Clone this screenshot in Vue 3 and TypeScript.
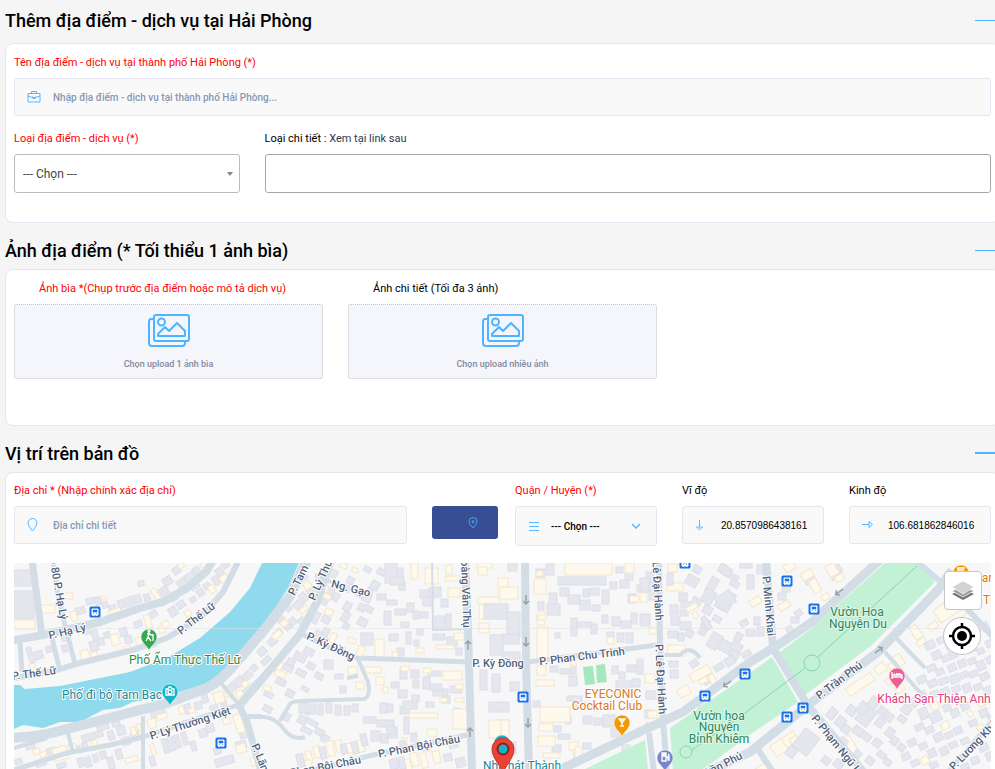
<script setup lang="ts">
import { ref } from 'vue'

interface Road { d: string; w: number }
interface Block { turn: number; cream: boolean; cells: string }
interface Label { text: string; x: number; y: number; turn?: number; kind?: string; start?: boolean }
interface Pin { x: number; y: number; fill: string; glyph: string; r: number }

const placeName = ref('')
const placeType = ref('')
const detailType = ref('')
const address = ref('')
const district = ref('')
const latitude = ref('20.8570986438161')
const longitude = ref('106.681862846016')

const roads: Road[] = [
  { d: 'M14 770L67 753L110 745L143 737L187 722L238 705', w: 5 },
  { d: 'M14 748L47 738M68 733L73 753M143 716V770M220 682L240 706M246 716H262', w: 4 },
  { d: 'M32 560L38 605L42 637', w: 7 },
  { d: 'M53 560L57 590L65 625L75 664M52 638L59 667M20 643L22 672', w: 5 },
  { d: 'M10 641L43 635L100 622L140 608L163 602L187 588L206 572L213 560', w: 8 },
  { d: 'M10 679L57 670L80 663L133 650L167 638L200 618L223 592L239 560', w: 6 },
  { d: 'M10 738Q40 737 67 729L117 716L167 703L207 688Q222 680 235 664L265 629L290 596L308 558', w: 10 },
  { d: 'M331 560L317 602L300 634L280 658L240 705', w: 8 },
  { d: 'M238 703L247 722L262 775', w: 7 },
  { d: 'M246 717H265Q275 718 283 728Q292 741 305 737M280 721L290 704Q293 701 300 701L364 699Q371 697 368 682L358 659M358 676L347 678', w: 4 },
  { d: 'M300 633L330 648L357 658L470 662', w: 5 },
  { d: 'M315 575L345 588', w: 4 },
  { d: 'M432 560L433 630L465 629', w: 2 },
  { d: 'M465 560L468 630L472 772', w: 8 },
  { d: 'M525 560L526 662L529 772', w: 8 },
  { d: 'M472 734L373 755L300 773', w: 5 },
  { d: 'M528 662L657 645', w: 5 },
  { d: 'M659 560L660 645L663 720L667 772', w: 6 },
  { d: 'M664 655H680Q690 644 700 658', w: 4 },
  { d: 'M553 773L633 735L683 712L750 662L778 645L812 622L882 558', w: 9 },
  { d: 'M708 772L750 752L812 702L878 652L938 590L952 570', w: 9 },
  { d: 'M766 560L773 648L808 706L866 775', w: 8 },
  { d: 'M912 558L946 586L995 639', w: 6 },
  { d: 'M885 652L922 695M896 638L925 668', w: 4 },
  { d: 'M755 745L773 772M649 733L654 772', w: 6 },
  { d: 'M948 772L995 718', w: 5 },
]

/* Each cell is "left top width height", turned about its own centre. */
const blocks: Block[] = [
  { turn: 0, cream: false, cells: '14 570 18 16|14 591 20 28' },
  { turn: 0, cream: true, cells: '14 620 21 9|40 605 15 8|62 593 11 6|102 596 4 4' },
  { turn: -17, cream: false, cells: '76 607 9 7|86 598 9 6|95 597 6 8|102 602 6 6|109 605 7 7|118 600 7 8|126 597 7 9|134 595 7 8|138 581 6 5|144 594 6 7|61 631 6 10|84 625 7 9|92 630 6 10|62 645 5 7|90 641 8 10|98 638 6 7|28 647 5 16|120 628 7 8|125 636 7 7|104 632 6 6|134 621 8 6|150 640 6 7|35 651 8 8|46 646 7 6' },
  { turn: -17, cream: true, cells: '109 609 12 4|71 611 6 10|111 634 8 11|81 650 8 10|123 646 8 5|136 637 7 8|145 615 6 13|159 626 6 7|91 652 6 5|29 664 6 4' },
  { turn: -34, cream: false, cells: '160 587 9 10|163 577 9 8|170 594 7 7|177 579 10 8|173 567 7 7|185 573 11 9|190 582 9 7|193 567 7 7|169 607 8 9|177 601 8 7|190 597 6 5|197 589 7 7|204 583 6 6|213 576 6 9|216 568 7 8|222 562 7 6|150 611 7 6' },
  { turn: -34, cream: true, cells: '153 588 5 12|178 563 6 5|209 585 6 8|220 575 8 7|162 621 7 7|185 610 6 6|200 562 9 4' },
  { turn: -16, cream: false, cells: '97 725 12 5|112 722 8 4|56 728 6 4|47 748 9 6|75 746 5 6|82 743 6 8|82 734 13 7|96 731 7 6|108 731 6 9|117 726 8 9|122 737 8 8|15 759 7 5|100 751 6 8|108 757 6 12|116 749 6 10|131 732 8 6|26 744 9 5|36 761 10 5|57 763 9 5|78 758 5 9|85 757 6 10|93 754 5 8|150 756 5 10|163 739 5 14|169 737 5 14|175 735 5 13|182 732 5 13|191 741 5 10|215 757 19 8|214 748 7 6|236 741 10 8|240 731 8 7|199 729 8 8|207 724 7 8|151 712 6 6|158 708 7 6|185 704 6 10|195 702 7 7|202 695 6 8|210 705 8 6|220 697 6 10' },
  { turn: -16, cream: true, cells: '53 747 14 13|33 749 7 5|40 752 7 5|68 744 8 7|92 740 6 10|100 717 10 4|133 706 7 4|148 719 8 9|157 714 10 5|131 727 5 8|137 724 4 6|151 744 4 11|179 706 5 8|189 708 6 5|235 714 8 19|236 744 10 9|214 692 10 11|125 757 13 5|223 718 7 6|251 757 6 9' },
  { turn: -42, cream: false, cells: '227 684 9 8|235 677 9 9|243 672 9 7|251 665 6 6|251 684 9 6|259 675 8 5|267 667 9 5|244 687 9 7|275 614 8 8|285 604 6 7|294 601 8 8|300 593 7 9|307 587 8 7|289 618 7 7|298 618 7 6|268 638 9 7|258 648 8 7|274 630 8 6|284 623 6 7|261 658 10 5|252 681 8 5|300 574 7 6' },
  { turn: -42, cream: true, cells: '272 632 10 6|281 620 7 6|299 607 9 5|304 582 7 7|236 691 7 6|274 664 10 6|225 690 7 6|242 681 7 6|298 564 9 5' },
  { turn: 28, cream: false, cells: '316 575 7 7|310 611 9 12|324 587 10 8|332 593 7 8|322 597 6 8|322 616 8 7|315 631 7 6|323 628 6 8|321 638 9 7|294 653 12 8|287 659 8 6|304 648 10 7|283 665 10 6|276 679 10 6|264 692 9 5|263 706 9 6|307 663 8 6|315 673 8 6|296 670 10 6|301 687 8 4|286 690 8 7|347 577 7 7|356 591 10 7|363 594 8 8|371 581 8 9|342 585 8 6|344 602 7 9|342 612 7 10|358 604 7 7|364 606 9 6|358 618 9 8|331 570 6 8|367 588 6 6|364 567 7 5|377 569 8 6|343 623 6 6|298 716 9 8|306 720 12 5|301 728 11 5|315 729 9 6|321 735 8 7|302 710 8 4|284 713 6 8' },
  { turn: 20, cream: true, cells: '325 570 7 5|320 585 8 7|325 609 8 6|323 594 8 5|330 633 6 10|348 638 8 5|340 647 5 8|275 671 11 6|263 686 8 5|357 646 7 12|352 568 6 4|340 563 7 5' },
  { turn: 0, cream: false, cells: '361 633 12 12|324 660 9 9|335 674 8 5|340 686 6 7|385 563 12 20|397 568 6 10|399 582 6 8|390 577 14 8|377 594 9 6|387 600 10 5|384 611 7 14|395 609 11 6|407 603 7 9|413 611 6 8|401 622 8 5|389 634 9 7|397 648 7 8|406 632 5 12|414 640 5 6|417 629 6 6|420 590 9 8|429 588 6 10|423 597 8 9|420 612 8 6|433 587 8 10|441 599 7 8|435 616 10 12|446 614 5 15|433 634 12 6|447 637 10 9|456 648 6 7|400 667 7 12|411 670 8 8|413 680 6 8|423 677 7 12|428 671 13 5|430 684 12 6|441 689 7 6|391 682 8 6|398 690 9 8|400 706 9 8|380 703 8 10|363 717 13 6|377 720 17 7|381 734 7 9|388 727 9 11|371 731 9 10|403 701 14 8|433 690 10 6|442 696 8 7|450 686 12 7|454 708 5 7|426 702 8 5|412 695 7 7|387 704 6 8|404 717 5 17|411 733 6 9|423 742 7 9|299 703 9 10|310 704 6 10|318 704 5 11|326 703 6 10|335 705 6 10|344 706 6 9|352 704 6 8' },
  { turn: 0, cream: true, cells: '411 563 7 16|425 568 13 16|446 576 17 5|448 588 12 9|454 633 10 7|436 645 18 4|375 639 9 19|392 652 6 8|416 648 8 5|365 667 16 6|348 667 9 7|376 677 8 8|383 687 5 6|401 666 8 5|423 668 8 5|443 671 19 9|455 684 8 5|440 698 7 4|453 709 17 20|409 713 29 5|427 729 10 7|402 738 5 8|455 698 9 4|434 738 8 5|356 682 8 7|477 563 15 5|478 597 22 7|498 578 10 20|503 587 6 10|479 623 10 10|479 604 6 15|489 720 20 18|500 587 18 12|478 567 9 8|446 565 6 9' },
  { turn: 0, cream: false, cells: '508 563 9 8|484 604 24 15|507 612 13 25|502 634 17 10|490 635 13 20|502 652 18 10|480 670 7 20|492 674 8 18|489 702 20 10|510 682 9 9|508 742 8 12|500 743 8 7' },
  { turn: -13, cream: true, cells: '306 751 6 13|314 746 6 12|327 741 7 15|336 740 6 12|347 743 6 10|358 740 6 12|405 759 6 12|411 753 7 13|421 753 6 15|433 751 7 12|305 760 6 10' },
  { turn: -13, cream: false, cells: '297 754 7 13|320 747 6 12|341 744 6 10|352 742 6 12|361 734 6 12|390 759 8 10|399 757 6 12|387 726 8 8|444 754 8 7|456 758 9 9|400 741 6 8|449 741 9 7' },
  { turn: 0, cream: false, cells: '536 569 9 8|546 564 8 11|558 577 48 8|549 593 8 20|560 588 9 8|568 595 12 9|583 589 6 8|590 588 9 7|580 600 10 10|592 605 8 6|602 590 7 14|610 582 7 7|620 580 9 8|628 594 8 9|637 585 12 7|646 572 7 9|538 602 6 8|547 604 13 11|571 618 6 18|577 622 15 5|591 624 6 10|555 633 5 5|602 615 6 8|612 617 8 9|621 621 10 7|631 613 6 11|640 614 10 12|607 632 7 6|617 633 7 9|626 633 7 10|640 578 10 14|649 582 6 18|616 567 7 6|625 571 8 9|550 666 8 6|560 669 14 5|571 665 5 9|569 676 8 10|612 666 6 8|619 672 6 7|627 665 9 7|637 659 6 15|616 681 15 8|632 679 8 8|646 691 10 8|645 710 9 8|533 701 7 6|567 696 15 5|576 702 10 5|583 716 9 8|603 715 12 12|594 718 9 7|611 729 13 8|554 726 7 6|558 734 12 5|583 743 8 6|566 715 5 9|668 631 10 7|678 633 6 8|669 661 9 6|670 670 8 8|646 723 6 6|552 745 9 7|574 752 8 6|622 745 8 6' },
  { turn: 0, cream: true, cells: '565 563 47 12|625 563 9 10|534 579 12 15|537 612 8 13|537 627 11 32|538 615 8 5|537 666 9 9|536 680 18 6|540 707 30 15|539 724 14 7|538 736 17 10|543 753 17 5|607 637 7 7|649 627 8 7|668 645 18 11|645 674 10 9|648 711 9 7|667 583 16 8|668 563 9 9|671 555 9 9|630 596 9 6|640 593 7 9|569 742 9 8|575 747 7 11|501 720 8 18|536 571 7 5|571 661 5 5' },
  { turn: 0, cream: false, cells: '670 605 8 10|679 593 8 8|667 573 6 12|681 602 9 6|680 610 8 6|671 617 9 8|680 622 11 8|740 563 12 5|747 575 7 14|757 565 6 9|782 583 8 9|778 593 8 7|791 617 8 6|754 617 6 8|746 630 9 6|757 627 7 9' },
  { turn: 30, cream: false, cells: '686 576 12 10|708 577 8 17|703 590 11 14|693 566 8 7|719 564 7 9|730 581 9 6|722 567 9 9|692 598 9 7|703 606 9 8|716 598 15 12|727 593 8 8|709 633 11 16|699 628 7 7|719 641 13 11|731 643 11 8|735 633 7 8|702 619 7 8|713 616 8 6|686 630 7 7|730 651 9 7|724 573 15 5' },
  { turn: -32, cream: false, cells: '717 593 17 14|725 657 10 8|714 664 10 6|704 616 5 14|740 620 8 6|703 677 8 7|787 626 6 8|795 610 7 6|804 575 11 8|831 573 9 6|835 565 6 8|698 703 8 7|690 660 8 7|742 651 9 6' },
  { turn: -30, cream: true, cells: '690 669 21 9|710 674 6 12|678 687 12 9|699 678 9 5|669 712 11 6|784 563 11 8|801 571 12 8|811 579 8 14|750 598 11 7|778 602 12 7|827 564 10 12|822 594 7 6|835 575 9 6|686 605 12 5|693 612 5 6' },
  { turn: -34, cream: true, cells: '845 680 30 9|875 664 11 9|893 655 10 12|889 662 9 8|895 684 9 8|886 678 8 6|772 741 15 13|783 734 14 11|790 737 8 6|756 764 17 11|846 735 9 22|912 625 8 14|928 623 10 6|917 639 9 6|935 602 26 15|961 614 12 8|931 702 8 8|968 711 5 6|977 725 7 6|921 757 8 7|941 722 8 7|978 700 8 6' },
  { turn: 38, cream: false, cells: '797 731 18 22|787 747 9 10|828 708 8 11|836 717 9 10|847 706 9 9|856 715 14 9|842 725 8 8|858 702 9 13|869 697 9 12|878 707 8 8|866 709 10 8|853 727 10 8|839 738 8 8|861 733 10 7|873 739 8 8|854 751 7 6|866 757 8 7|822 757 8 7|834 760 9 8|876 718 8 9|885 713 8 8|902 705 9 9|910 699 8 7|898 716 8 6|886 728 8 9|891 737 7 8|898 744 7 7|877 752 9 6|884 759 7 6' },
  { turn: -24, cream: false, cells: '925 641 10 8|937 637 9 6|946 643 8 6|932 651 9 8|942 655 9 6|950 650 7 8|959 647 8 6|967 644 9 8|977 648 7 6|986 640 7 7|927 665 9 6|936 669 8 6|948 664 8 7|958 660 8 7|968 658 8 6|977 661 8 9|986 656 8 7|917 676 9 7|928 680 9 7|939 678 9 6|950 675 9 8|960 672 8 6|969 671 9 6|980 673 9 7|919 691 7 6|930 691 9 6|941 688 8 7|952 686 8 6|963 684 8 8|974 684 8 6|984 687 8 7|919 708 9 11|930 712 11 10|943 704 8 7|951 709 8 8|961 703 8 7|969 720 8 6|980 709 8 8|988 715 7 6|915 724 9 6|925 727 9 6|934 733 9 8|945 732 8 6|954 727 8 7|908 739 8 7|919 743 8 6|928 749 8 8|940 747 8 8|949 742 8 6|961 738 8 6|902 753 8 7|911 760 8 6|930 762 8 6|979 744 9 7|986 752 8 8|971 757 8 7|961 764 8 6|960 630 8 8|971 626 9 7|981 622 7 8' },
]

const labels: Label[] = [
  { text: '- 80 P. Hạ Lý', x: 59, y: 590, turn: 80 },
  { text: 'P. Hạ Lý', x: 67, y: 631, turn: -13 },
  { text: 'P. Thế Lữ', x: 196, y: 618, turn: -38 },
  { text: 'P. Thế Lữ', x: 34, y: 673, turn: -8 },
  { text: 'P. Lý Thường Kiệt', x: 190, y: 723, turn: -18 },
  { text: 'P. Lãn Ông', x: 255, y: 744, turn: 68, start: true },
  { text: 'P. Tam', x: 298, y: 580, turn: -64 },
  { text: 'P. Lý Thu', x: 320, y: 580, turn: -66 },
  { text: 'Ng. Gạo', x: 351, y: 588, turn: 14 },
  { text: 'P. Kỳ Đồng', x: 331, y: 646, turn: 25 },
  { text: 'P. Kỳ Đồng', x: 498, y: 663 },
  { text: 'Hoàng Văn Thụ', x: 466, y: 590, turn: 88 },
  { text: 'P. Phan Bội Châu', x: 419, y: 746, turn: -11 },
  { text: 'P. Phan Bội Châu', x: 320, y: 767, turn: -11 },
  { text: 'P. Phan Chu Trinh', x: 582, y: 656, turn: -7 },
  { text: 'Lê Đại Hành', x: 658, y: 591, turn: 87 },
  { text: 'P. Lê Đại Hành', x: 661, y: 679, turn: 87 },
  { text: 'P. Minh Khai', x: 769, y: 606, turn: 85 },
  { text: 'P. Trần Phú', x: 839, y: 680, turn: -37 },
  { text: 'P. Trần Phú', x: 717, y: 767, turn: -27 },
  { text: 'P. Phạm Ngũ Lão', x: 814, y: 716, turn: 51, start: true },
  { text: 'P. Lương Khánh', x: 951, y: 768, turn: -46, start: true },
  { text: 'Phố Ẩm Thực Thế Lữ', x: 185, y: 660, kind: 'green' },
  { text: 'Phố đi bộ Tam Bạc', x: 112, y: 695, kind: 'teal' },
  { text: 'EYECONIC', x: 613, y: 694, kind: 'orange' },
  { text: 'Cocktail Club', x: 607, y: 706, kind: 'orange' },
  { text: 'Vườn Hoa', x: 857, y: 612, kind: 'park' },
  { text: 'Nguyễn Du', x: 858, y: 624, kind: 'park' },
  { text: 'Vườn hoa', x: 719, y: 716, kind: 'park' },
  { text: 'Nguyễn', x: 719, y: 727, kind: 'park' },
  { text: 'Bỉnh Khiêm', x: 719, y: 739, kind: 'park' },
  { text: 'Khách Sạn Thiện Anh', x: 934, y: 699, kind: 'pink' },
  { text: 'Nhà hát Thành', x: 522, y: 766, kind: 'teal' },
  { text: 'ar', x: 987, y: 578, kind: 'orange' },
  { text: 'Ti', x: 988, y: 600, kind: 'orange' },
]

const stops: number[][] = [
  [95, 612], [221, 743], [523, 697], [705, 696], [745, 674],
  [787, 717], [803, 708], [787, 581], [814, 609], [685, 563],
]

const pins: Pin[] = [
  { x: 149, y: 651, r: 8, fill: '#34a853', glyph: 'M1-5a1 1 0 1 0-2 0a1 1 0 1 0 2 0M-2-2L0-3L2-1L4-1M0-3L-1 1L2 5M-1 1L-3 5M4-2V5' },
  { x: 170, y: 706, r: 8, fill: '#12b5cb', glyph: 'M-4-2H-2L-1-4H1L2-2H4V4H-4ZM2 1a2 2 0 1 0-4 0a2 2 0 1 0 4 0' },
  { x: 622, y: 737, r: 8, fill: '#f29900', glyph: 'M-3-3H3L0 1ZM0 1V4M-2 4H2M-1-2H1' },
  { x: 897, y: 690, r: 8, fill: '#ec5f93', glyph: 'M-5-3V4M-5 2H5V0H-5M5 0V4M-1-1H4M-3-1H-2' },
  { x: 665, y: 772, r: 8, fill: '#7986cb', glyph: 'M-3 4V-4H1V4ZM-2-3H0V-1H-2ZM1 0H3V3H4V-2L3-3' },
  { x: 961, y: 587, r: 8, fill: '#f29900', glyph: 'M-4-4H4M-3-2H3M-3-4V0' },
  { x: 502, y: 757, r: 8, fill: '#12b5cb', glyph: 'M-2 0H2' },
]

const arrows: number[][] = [
  [468, 645, 0], [470, 732, 0], [526, 600, 180], [526, 642, 180], [528, 723, 180],
  [727, 684, 235], [839, 592, 235], [879, 650, 52],
]

const shapes = blocks.flatMap((block) =>
  block.cells.split('|').map((cell) => {
    const [x, y, w, h] = cell.split(' ').map(Number)
    return { x, y, w, h, cream: block.cream, turn: `rotate(${block.turn} ${x + w / 2} ${y + h / 2})` }
  }),
)

function pinPath(r: number): string {
  return `M0 0C-1-5-${r}-8-${r}-14A${r} ${r} 0 0 1 ${r}-14C${r}-8 1-5 0 0Z`
}
</script>

<template>
  <form class="page" @submit.prevent>
    <section class="section">
      <header class="head first">
        <h2>Thêm địa điểm - dịch vụ tại Hải Phòng</h2>
        <span class="rule"></span>
      </header>
      <div class="card basics">
        <div class="full">
          <label class="caption required" for="name">Tên địa điểm - dịch vụ tại thành phố Hải Phòng (*)</label>
          <div class="field">
            <svg class="icon" viewBox="0 0 14 14" width="14" height="14">
              <path d="M1 3.5h12v8.500H1zM4.500 3.500v-2h5v2M1 6l4.500 1.500h3L13 6M5.500 6.500v1.500q1.500 1.500 3 0v-1.500" />
            </svg>
            <input id="name" v-model="placeName" type="text" placeholder="Nhập địa điểm - dịch vụ tại thành phố Hải Phòng..." />
          </div>
        </div>
        <div class="quarter">
          <label class="caption required" for="type">Loại địa điểm - dịch vụ (*)</label>
          <div class="choice plain">
            <select id="type" v-model="placeType">
              <option value="">--- Chọn ---</option>
            </select>
            <svg class="caret" viewBox="0 0 6 4" width="6" height="4"><path d="M0 0H6L3 4Z" /></svg>
          </div>
        </div>
        <div class="rest">
          <label class="caption" for="detail">Loại chi tiết : <a href="#types">Xem tại link sau</a></label>
          <input id="detail" v-model="detailType" class="outlined" type="text" />
        </div>
      </div>
    </section>

    <section class="section">
      <header class="head">
        <h2>Ảnh địa điểm (* Tối thiểu 1 ảnh bìa)</h2>
        <span class="rule"></span>
      </header>
      <div class="card photos">
        <div class="third">
          <label class="caption inset required" for="cover">Ảnh bìa *(Chụp trước địa điểm hoặc mô tả dịch vụ)</label>
          <label class="drop">
            <svg viewBox="0 0 42 33" width="42" height="33">
              <rect x="6" y="1" width="35" height="26" rx="2" />
              <path d="M6 5H3Q1 5 1 8V29Q1 32 4 32H34Q37 32 37 29V27M10 22V20L17 13L21 17L29 9L37 17V22ZM17 8a3.500 3.500 0 1 0-7 0a3.500 3.500 0 1 0 7 0" />
            </svg>
            <span>Chọn upload 1 ảnh bìa</span>
            <input id="cover" type="file" accept="image/*" />
          </label>
        </div>
        <div class="third">
          <label class="caption inset" for="gallery">Ảnh chi tiết (Tối đa 3 ảnh)</label>
          <label class="drop">
            <svg viewBox="0 0 42 33" width="42" height="33">
              <rect x="6" y="1" width="35" height="26" rx="2" />
              <path d="M6 5H3Q1 5 1 8V29Q1 32 4 32H34Q37 32 37 29V27M10 22V20L17 13L21 17L29 9L37 17V22ZM17 8a3.500 3.500 0 1 0-7 0a3.500 3.500 0 1 0 7 0" />
            </svg>
            <span>Chọn upload nhiều ảnh</span>
            <input id="gallery" type="file" accept="image/*" multiple />
          </label>
        </div>
      </div>
    </section>

    <section class="section grow">
      <header class="head">
        <h2>Vị trí trên bản đồ</h2>
        <span class="rule thick"></span>
      </header>
      <div class="card location">
        <div class="row">
          <div class="five">
            <label class="caption required" for="address">Địa chỉ * (Nhập chính xác địa chỉ)</label>
            <div class="field">
              <svg class="icon" viewBox="0 0 14 14" width="14" height="14">
                <path d="M5.500 13Q1 8 1 5a4.500 4.500 0 0 1 9 0Q10 8 5.500 13Z" />
              </svg>
              <input id="address" v-model="address" type="text" placeholder="Địa chỉ chi tiết" />
            </div>
          </div>
          <button class="find" type="button" aria-label="Tìm trên bản đồ">
            <svg class="icon" viewBox="0 0 10 12" width="10" height="12">
              <path d="M5 11Q1 7 1 4.500a4 4 0 0 1 8 0Q9 7 5 11ZM5 3v3.500M3.500 4.800h3" />
            </svg>
          </button>
          <div class="two shifted">
            <label class="caption required" for="district">Quận / Huyện (*)</label>
            <div class="choice soft">
              <select id="district" v-model="district">
                <option value="">--- Chọn ---</option>
              </select>
              <svg class="icon lead" viewBox="0 0 10 9" width="10" height="9"><path d="M0 .5H10M0 4.500H10M0 8.500H10" /></svg>
              <svg class="icon chevron" viewBox="0 0 10 6" width="10" height="6"><path d="M1 1L5 5L9 1" /></svg>
            </div>
          </div>
          <div class="two">
            <label class="caption" for="lat">Vĩ độ</label>
            <div class="field">
              <svg class="icon" viewBox="0 0 14 14" width="14" height="14"><path d="M4.500 2V9M1.500 9H7.500L4.500 12Z" /></svg>
              <input id="lat" v-model="latitude" class="number" type="text" />
            </div>
          </div>
          <div class="two">
            <label class="caption" for="lng">Kinh độ</label>
            <div class="field">
              <svg class="icon" viewBox="0 0 14 14" width="14" height="14"><path d="M0 6.500H7M7 3.500V9.500L10.500 6.500Z" /></svg>
              <input id="lng" v-model="longitude" class="number" type="text" />
            </div>
          </div>
        </div>

        <div class="map">
          <svg class="canvas" viewBox="14 563 977 206" preserveAspectRatio="xMinYMin slice">
            <rect class="land" x="14" y="563" width="977" height="206" />
            <path class="water" d="M14 685L20 685L25 689L60 686L130 672L167 658L200 638L230 612L250 588L262 563H299L288 588L270 616L255 640L240 660L225 674L205 684L180 692L160 697L133 702L120 708L103 710L80 722L60 722L43 728L23 725L14 729Z" />
            <rect v-for="(s, i) in shapes" :key="i" :class="s.cream ? 'cream' : 'grey'" :x="s.x" :y="s.y" :width="s.w" :height="s.h" :transform="s.turn" />
            <path class="park" d="M780 652L812 628L885 563H918L935 582L872 645L805 695ZM670 728L740 680L772 657L798 702L745 738L700 772H673ZM583 770L645 740L648 770Z" />
            <path class="court" d="M583 667L593 666L595 684L585 685ZM596 665L605 664L607 682L597 683Z" />
            <path v-for="(r, i) in roads" :key="i" class="road" :d="r.d" :stroke-width="r.w" />
            <path class="trail" d="M692 750L745 713L805 668M818 657L917 566M820 663a8 8 0 1 0-16 0a8 8 0 1 0 16 0M692 752a6 6 0 1 0-12 0a6 6 0 1 0 12 0" />
            <path class="seam" d="M14 628.500H991" />
            <g v-for="(a, i) in arrows" :key="i" :transform="`translate(${a[0]} ${a[1]}) rotate(${a[2]})`">
              <path class="arrow" d="M0 5V-3M-3-1L0-4L3-1" />
            </g>
            <text
              v-for="(l, i) in labels" :key="i" :class="['street', l.kind, { start: l.start }]" dy="4"
              :transform="`translate(${l.x} ${l.y}) rotate(${l.turn ?? 0})`"
            >{{ l.text }}</text>
            <g v-for="(s, i) in stops" :key="i" :transform="`translate(${s[0]} ${s[1]})`">
              <rect class="stop" x="-5.500" y="-5.500" width="11" height="11" rx="1.500" />
              <path class="bus" d="M-3-3H3V3H-3ZM-2 3V4M2 3V4" />
              <path class="glass" d="M-2-2H2V0H-2ZM-2 1.500H-1M1 1.500H2" />
            </g>
            <g v-for="(p, i) in pins" :key="i" :transform="`translate(${p.x} ${p.y})`">
              <path :d="pinPath(p.r)" :fill="p.fill" stroke="#fff" stroke-width=".5" />
              <path class="glyph" transform="translate(0 -15)" :d="p.glyph" />
            </g>
            <g transform="translate(503 775)">
              <path d="M0 0C-1-9-11-16-11-26A11 11 0 0 1 11-26C11-16 1-9 0 0Z" fill="#ea4335" stroke="#c5362b" />
              <circle cy="-26" r="5.500" fill="#12b5cb" stroke="#8f201d" stroke-width="2" />
            </g>
          </svg>
          <button class="layers" type="button" aria-label="Lớp bản đồ">
            <svg viewBox="0 0 24 24" width="24" height="24">
              <path d="M1 15L12 21L23 15L12 10Z" fill="#747474" />
              <path d="M1 12L12 18L23 12L12 7Z" fill="#9d9d9d" stroke="#fff" stroke-width=".7" />
              <path d="M1 8L12 15L23 8L12 2Z" fill="#d2d2d2" stroke="#fff" stroke-width=".7" />
            </svg>
          </button>
          <button class="locate" type="button" aria-label="Vị trí của tôi">
            <svg viewBox="0 0 26 26" width="26" height="26">
              <circle cx="13" cy="13" r="9" fill="none" stroke="#000" stroke-width="2.500" />
              <circle cx="13" cy="13" r="5" />
              <path d="M13 0V5M13 21V26M0 13H5M21 13H26" stroke="#000" stroke-width="2.500" />
            </svg>
          </button>
        </div>
      </div>
    </section>
  </form>
</template>

<style>
body {
  background: #f5f5f5;
}
</style>

<style scoped>
* {
  box-sizing: border-box;
}
.page {
  display: flex;
  flex-direction: column;
  min-height: 100vh;
  padding-left: 5px;
  overflow: hidden;
  font-family: Roboto, 'Liberation Sans', sans-serif;
  font-size: 11px;
  color: #000;
}
.section {
  margin-right: -5px;
}
.grow {
  display: flex;
  flex: 1;
  flex-direction: column;
}
.head {
  display: flex;
  align-items: center;
  justify-content: space-between;
  height: 38px;
  margin-top: 8px;
}
.first {
  margin: 1px 0 4px;
}
h2 {
  margin: 0;
  font-size: 18px;
  font-weight: 500;
}
.rule {
  width: 25px;
  height: 1px;
  background: #4db5ff;
}
.thick {
  height: 2px;
}
.card {
  padding: 11px 8px 0;
  background: #fff;
  border: 1px solid #e6e6f2;
  border-radius: 8px;
}
.basics,
.photos,
.row {
  display: grid;
  grid-template-columns: repeat(12, minmax(0, 1fr));
  column-gap: 25px;
}
.basics {
  row-gap: 15px;
  padding-bottom: 29px;
}
.photos {
  padding-bottom: 46px;
}
.location {
  display: flex;
  flex: 1;
  flex-direction: column;
  gap: 17px;
  padding-top: 10px;
  border-bottom: 0;
  border-radius: 8px 8px 0 0;
}
.full { grid-column: span 12; }
.quarter { grid-column: span 3; }
.rest { grid-column: span 9; }
.third { grid-column: span 4; }
.five { grid-column: span 5; }
.two { grid-column: span 2; }
.shifted { grid-column: 7 / span 2; }
.caption {
  display: block;
  margin-bottom: 7px;
  line-height: 16px;
  white-space: nowrap;
}
.required {
  color: #f00;
}
.inset {
  padding-left: 25px;
}
.caption a {
  color: #2c3a55;
  text-decoration: none;
}
.field {
  display: flex;
  align-items: center;
  gap: 12px;
  height: 38px;
  padding-left: 12px;
  background: #f9f9f9;
  border: 1px solid #e6e6f2;
  border-radius: 3px;
}
.icon {
  flex: none;
  fill: none;
  stroke: #5cb6ff;
}
.field input {
  flex: 1;
  min-width: 0;
  height: 100%;
  padding: 0;
  font: 500 10px Roboto, 'Liberation Sans', sans-serif;
  color: #000;
  background: none;
  border: 0;
}
.field input::placeholder {
  color: #8797b4;
  opacity: 1;
}
.field .number {
  font: 10px 'Liberation Sans', sans-serif;
}
.outlined {
  display: block;
  width: 100%;
  height: 39px;
  background: #fff;
  border: 1px solid #a6a6a6;
  border-radius: 3px;
}
.choice {
  display: grid;
  align-items: center;
}
.choice > * {
  grid-area: 1 / 1;
}
.choice svg {
  pointer-events: none;
}
.choice select {
  width: 100%;
  appearance: none;
  font-family: inherit;
  border-radius: 3px;
}
.plain select {
  height: 39px;
  padding: 0 8px;
  font-size: 12px;
  color: #444;
  background: #fff;
  border: 1px solid #bbb;
}
.caret {
  justify-self: end;
  margin-right: 7px;
  fill: #888;
}
.soft select {
  height: 40px;
  padding: 0 35px;
  font-size: 10px;
  font-weight: 500;
  color: #000;
  background: #f9f9f9;
  border: 1px solid #e6e6f2;
}
.lead {
  margin-left: 14px;
}
.chevron {
  justify-self: end;
  margin-right: 16px;
  stroke-width: 1.5;
}
.drop {
  position: relative;
  display: flex;
  flex-direction: column;
  align-items: center;
  gap: 10px;
  height: 75px;
  padding-top: 9px;
  font-size: 9px;
  font-weight: 500;
  line-height: 14px;
  color: #8589a0;
  background: #f4f6fb;
  border: 1px dotted #c4c4cc;
  border-radius: 3px;
}
.drop svg {
  flex: none;
  fill: none;
  stroke: #4db5ff;
  stroke-width: 2;
  stroke-linejoin: round;
}
.drop input {
  position: absolute;
  width: 1px;
  height: 1px;
  opacity: 0;
}
.find {
  display: flex;
  align-items: center;
  justify-content: flex-end;
  width: 66px;
  height: 33px;
  margin-top: 23px;
  padding: 0 20px;
  background: #384e94;
  border: 0;
  border-radius: 3px;
}
.find svg {
  stroke: #47a5f5;
}
.map {
  position: relative;
  flex: 1;
  min-height: 206px;
  overflow: hidden;
}
.canvas {
  display: block;
  width: 100%;
  height: 100%;
}
.land { fill: #f7f7f7; }
.water { fill: #90daee; }
.park { fill: #c3f1d5; }
.court { fill: #a5e8bd; }
.grey { fill: #e6e7ee; stroke: #dcdee9; stroke-width: 1; }
.cream { fill: #fef9ec; stroke: #f2e7ca; stroke-width: 1; }
.road { fill: none; stroke: #d3dde6; stroke-linejoin: round; }
.trail { fill: none; stroke: #8bd3b4; stroke-width: 1; }
.seam { stroke: #e3e5e8; stroke-width: 1; opacity: .6; }
.arrow { fill: none; stroke: #98a0a9; stroke-width: 1.5; }
.street {
  font-size: 11px;
  font-weight: 500;
  text-anchor: middle;
  fill: #52617a;
  stroke: #fff;
  stroke-width: 2px;
  stroke-linejoin: round;
  paint-order: stroke;
}
.start { text-anchor: start; }
.green,
.teal,
.orange,
.park.street,
.pink {
  font-size: 12px;
  font-weight: 400;
}
.green { fill: #2a8c4a; }
.teal { fill: #1c8796; }
.orange { fill: #d9791a; }
.park.street { fill: #2f8560; stroke: #dff8e9; }
.pink { fill: #e0407e; }
.stop { fill: #1a73e8; }
.bus { fill: #fff; stroke: #fff; stroke-width: 1; }
.glass { fill: #1a73e8; stroke: #1a73e8; stroke-width: .6; }
.glyph { fill: none; stroke: #fff; stroke-width: 1.3; }
.layers,
.locate {
  position: absolute;
  display: flex;
  align-items: center;
  justify-content: center;
  padding: 0;
  background: #fff;
  border: 1px solid #c4c6c9;
}
.layers {
  top: 8px;
  right: 9px;
  width: 38px;
  height: 39px;
  border-radius: 4px;
}
.locate {
  top: 54px;
  right: 10px;
  width: 38px;
  height: 38px;
  border-radius: 50%;
}
</style>
